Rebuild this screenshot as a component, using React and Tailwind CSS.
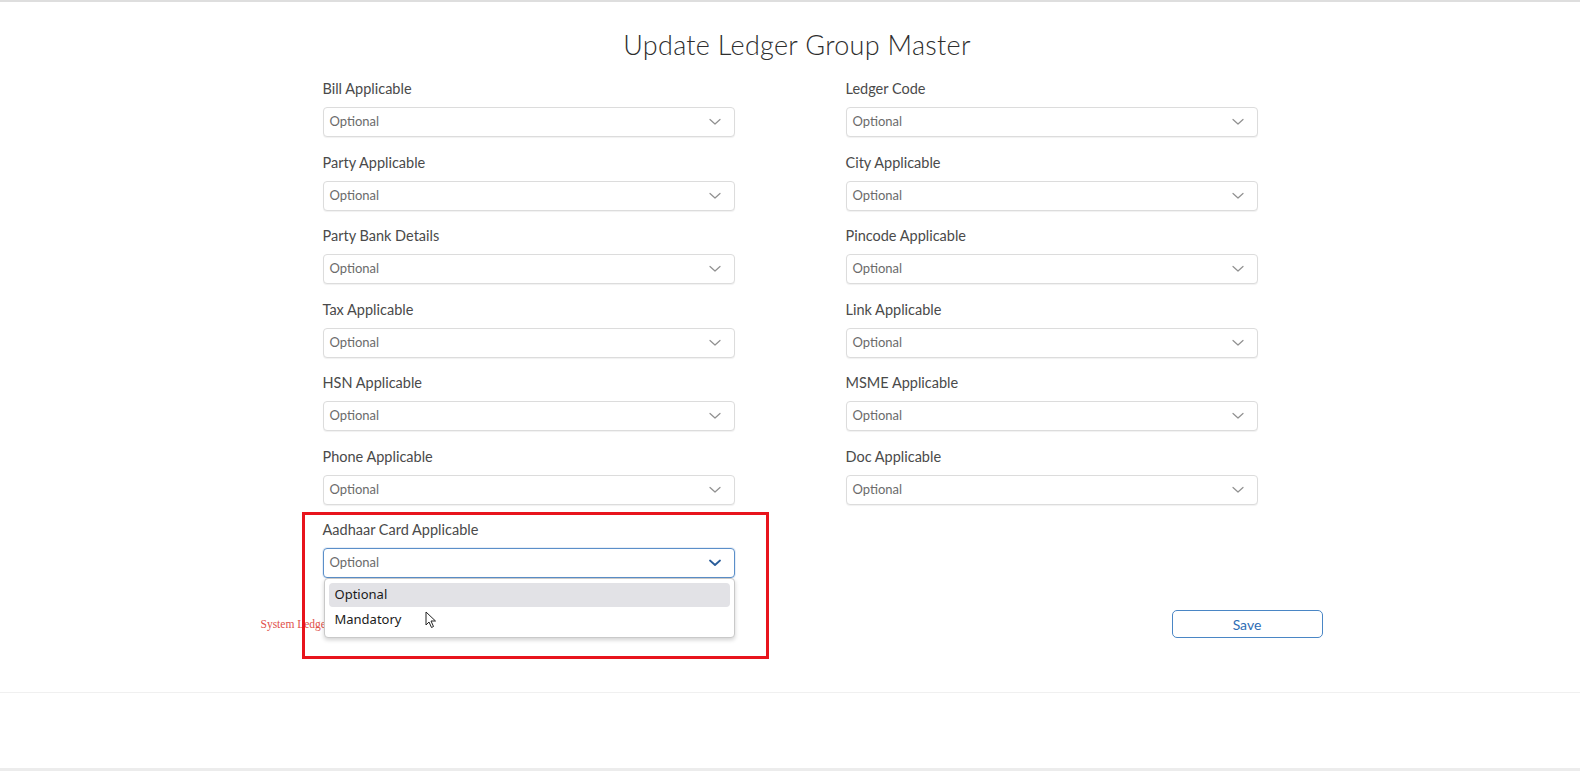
import React from "react";

const left = ["Bill Applicable", "Party Applicable", "Party Bank Details", "Tax Applicable", "HSN Applicable", "Phone Applicable", "Aadhaar Card Applicable"];
const right = ["Ledger Code", "City Applicable", "Pincode Applicable", "Link Applicable", "MSME Applicable", "Doc Applicable"];

function Chevron({ active }) {
  return (
    <svg width="12" height="8" viewBox="0 0 12 8" className="shrink-0">
      <path d="M1 1.5 L6 6 L11 1.5" fill="none" stroke={active ? "#2a5d9a" : "#909090"} strokeWidth={active ? 1.8 : 1.2} strokeLinecap="round" strokeLinejoin="round" />
    </svg>
  );
}

function Field({ label, active }) {
  return (
    <div className="flex flex-col">
      <div className="text-[14.5px] leading-[20px] text-[#4a4a4a] mb-[8px]">{label}</div>
      <div className={"relative h-[30px] flex items-center justify-between rounded-[4px] bg-white pl-[6px] pr-[13px] border " + (active ? "border-[#5b8fc9] shadow-[0_0_0_1px_rgba(91,143,201,0.15)]" : "border-[#dcdcdc] shadow-[0_1px_1px_rgba(0,0,0,0.06)]")}>
        <span className="text-[13px] text-[#6b6b6b]">Optional</span>
        <Chevron active={active} />
        {active && (
          <div className="absolute left-0 top-[29px] w-[411px] h-[60px] bg-white border border-[#c9c9c9] rounded-[4px] shadow-[0_2px_4px_rgba(0,0,0,0.18)] px-[4px] pt-[4px] z-10" style={{ fontFamily: '"Noto Sans", sans-serif' }}>
            <div className="h-[24px] rounded-[4px] bg-[#e2e2e6] flex items-center pl-[6px] text-[13px] text-[#1a1a1a]">Optional</div>
            <div className="h-[26px] flex items-center pl-[6px] text-[13px] text-[#1a1a1a]">Mandatory</div>
            <svg className="absolute left-[100px] top-[32px]" width="12" height="18" viewBox="0 0 12 18">
              <path d="M1 1 L1 14 L4 11 L6.5 16.5 L8.5 15.5 L6 10 L10.5 10 Z" fill="white" stroke="#222" strokeWidth="1" strokeLinejoin="round" />
            </svg>
          </div>
        )}
      </div>
    </div>
  );
}

export default function App() {
  return (
    <div className="w-[1580px] h-[771px] bg-white relative overflow-hidden" style={{ fontFamily: 'Lato, "Open Sans", sans-serif' }}>
      <div className="h-[2px] bg-[#dedede]" />
      <div className="h-[690px] flex flex-col items-center">
        <h1 className="mt-[27px] ml-[14px] text-[27px] leading-[32px] text-[#2e2e2e] font-light tracking-[0.3px]">Update Ledger Group Master</h1>
        <div className="mt-[18px] w-[935px] grid grid-cols-2 gap-x-[111px] gap-y-[15.5px]">
          {left.map((l, i) => (
            <React.Fragment key={l}>
              <Field label={l} active={i === 6} />
              {right[i] ? <Field label={right[i]} /> : <div />}
            </React.Fragment>
          ))}
        </div>
        <div className="w-[1062px] ml-[3px] mt-[32px] flex items-center justify-between">
          <span className="text-[11.5px] text-[#e0504a] mt-[1px]" style={{ fontFamily: '"Liberation Serif", serif' }}>System Ledger</span>
          <button className="w-[151px] h-[28px] rounded-[5px] border border-[#4a86c5] text-[14px] text-[#2f6db5] bg-white">Save</button>
        </div>
      </div>
      <div className="h-[1px] bg-[#f0f0f0]" />
      <div className="absolute left-0 bottom-0 w-full h-[3px] bg-[#ececec]" />
      <div className="absolute left-[302px] top-[512px] w-[467px] h-[147px] border-[3px] border-[#e8141c] pointer-events-none z-20" />
    </div>
  );
}
